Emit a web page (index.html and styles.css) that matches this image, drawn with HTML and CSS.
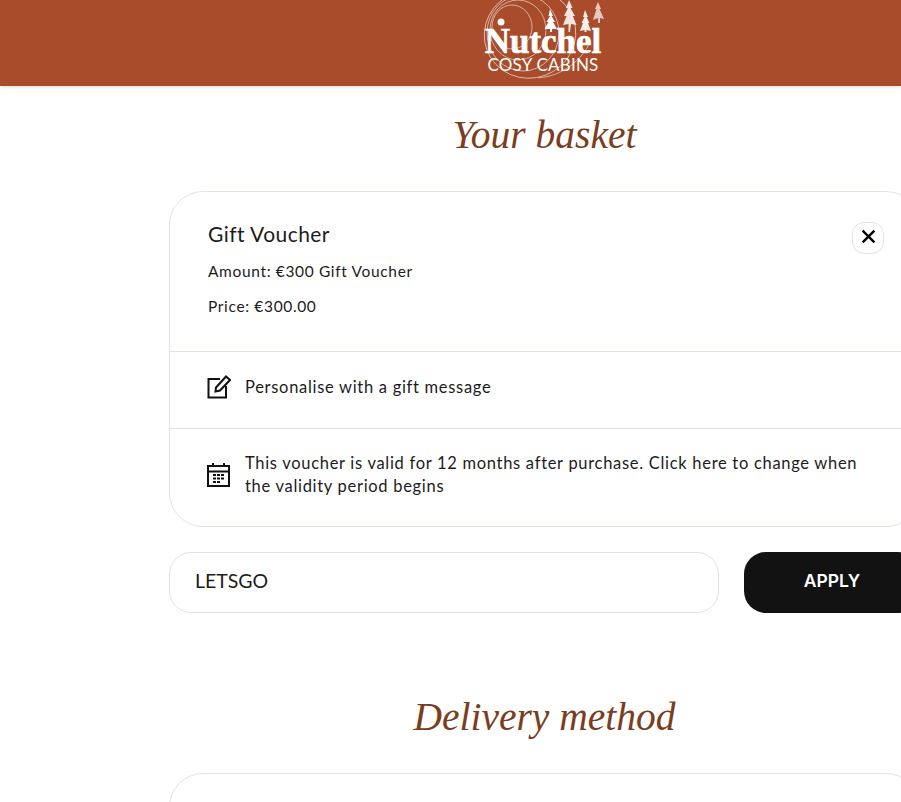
FILE: index.html
```html
<!DOCTYPE html>
<html lang="en">
<head>
<meta charset="UTF-8">
<meta name="viewport" content="width=device-width, initial-scale=1.0">
<title>Your basket</title>
<link rel="stylesheet" href="styles.css">
</head>
<body>
<div class="header">
  <a class="logo">
    <svg class="logo-art" width="130" height="86" viewBox="0 0 130 86">
      <g fill="none" stroke="#fff" stroke-width="0.8" opacity="0.7">
        <ellipse cx="52" cy="34" rx="46" ry="44" transform="rotate(-20 52 34)"/>
        <ellipse cx="45" cy="33" rx="36" ry="38"/>
        <ellipse cx="40" cy="30" rx="28" ry="30"/>
        <ellipse cx="34" cy="27" rx="20" ry="22"/>
        <path d="M60 78C85 76 104 60 112 42"/>
      </g>
      <circle cx="23" cy="22" r="3.5" fill="#fff"/>
      <g fill="#fff">
        <path d="M72 9l3 7-1.500 0 3.500 6-2 0 4 7-5 0 0 3-2 0 0-3-5.500 0 4-7-2 0 3.500-6-1.500 0z"/>
        <path d="M91 0l3.500 8-2 0 4.500 8-2.500 0 4 9-5.500-1-1 8-1.500 0 0-8-5.500 1 3.500-9-2.500 0 4-8-2 0z" opacity="0.85"/>
        <path d="M107 10l3 7-1.500 0 3 6-1.500 0 3 8-4.500-1 0 2-2 0 0-2-4.500 1 3-8-1.500 0 3-6-1.500 0z" opacity="0.9"/>
        <path d="M120 2l3 7-1.500 0 4.500 10-4-1 0 5-2 0 0-5-5 2 3.500-11-1.500 0z" opacity="0.7"/>
      </g>
    </svg>
    <span class="logo-name">Nutchel</span>
    <span class="logo-sub">COSY CABINS</span>
  </a>
</div>

<div class="main">
  <h2 class="title">Your basket</h2>

  <div class="card">
    <div class="item">
      <button class="remove" aria-label="Remove">
        <svg width="15" height="15" viewBox="0 0 14 14"><path d="M1.500 1.500l11 11M12.500 1.500l-11 11" stroke="#000" stroke-width="2.200" fill="none"/></svg>
      </button>
      <h3>Gift Voucher</h3>
      <p>Amount: €300 Gift Voucher</p>
      <p>Price: €300.00</p>
    </div>
    <div class="row row-message">
      <svg class="icon" width="24" height="24" viewBox="0 0 24 24" fill="none" stroke="#111" stroke-width="2">
        <path d="M13 4H1.500V22.500H19V11"/>
        <path d="M9 12.500L19 1.500L23 5L13 15.500L8.500 16.500z"/>
      </svg>
      <span>Personalise with a gift message</span>
    </div>
    <div class="row row-valid">
      <svg class="icon" width="24" height="24" viewBox="0 0 24 24" fill="none" stroke="#111" stroke-width="2">
        <rect x="1" y="3" width="21" height="20"/>
        <path d="M1 8.500H22M6 0V4M17 0V4"/>
        <path d="M6 12h3M10 12h3M14 12h3M6 15.500h3M10 15.500h3M14 15.500h3M6 19h3M10 19h3" stroke-width="2"/>
      </svg>
      <span>This voucher is valid for 12 months after purchase. Click here to change when the validity period begins</span>
    </div>
  </div>

  <div class="coupon">
    <input class="coupon-input" type="text" value="LETSGO">
    <button class="apply">APPLY</button>
  </div>

  <h2 class="title title-delivery">Delivery method</h2>

  <div class="card card-delivery"></div>
</div>
</body>
</html>
```

FILE: styles.css
```css
html, body {
  margin: 0;
  padding: 0;
  overflow: hidden;
  height: 802px;
}
body {
  background-color: #fff;
  font-family: "Lato", sans-serif;
  color: #1c1c1c;
}
.header {
  display: flex;
  justify-content: center;
  height: 86px;
  padding-left: 185px;
  background-color: #a84c2b;
  box-shadow: 0 1px 4px rgba(0, 0, 0, 0.15);
  overflow: hidden;
}
.logo {
  position: relative;
  display: flex;
  flex-direction: column;
  align-items: center;
  width: 130px;
  color: #fff;
}
.logo-art {
  position: absolute;
  top: 0;
  left: 0;
}
.logo-name {
  position: relative;
  margin-top: 26px;
  font-family: "Liberation Serif", serif;
  font-weight: bold;
  font-size: 35px;
  line-height: 32px;
  -webkit-text-stroke: 0.6px #fff;
}
.logo-sub {
  position: relative;
  font-size: 17px;
  line-height: 14px;
  font-weight: 400;
  letter-spacing: 0.2px;
}
.main {
  width: 751px;
  margin-left: 169px;
}
.title {
  margin: 0;
  padding-top: 22px;
  height: 105px;
  box-sizing: border-box;
  text-align: center;
  font-family: "Liberation Serif", serif;
  font-style: italic;
  font-weight: normal;
  font-size: 39.500px;
  line-height: 54px;
  color: #7a3e1e;
}
.card {
  border: 1px solid #e2e1ee;
  border-radius: 34px;
}
.item {
  position: relative;
  height: 159px;
  box-sizing: border-box;
  padding: 29px 38px 0;
}
.item h3 {
  margin: 0 0 14px;
  font-size: 21px;
  line-height: 26px;
  font-weight: 400;
  letter-spacing: 0.45px;
}
.item p {
  margin: 0 0 14px;
  font-size: 15.500px;
  line-height: 21px;
  letter-spacing: 0.65px;
}
.remove {
  position: absolute;
  top: 30px;
  right: 35px;
  display: flex;
  align-items: center;
  justify-content: center;
  width: 32px;
  height: 32px;
  padding: 0 0 3px;
  background: #fff;
  border: 1px solid #e2e1ee;
  border-radius: 12px;
}
.row {
  display: flex;
  align-items: center;
  gap: 14px;
  padding: 0 38px 0 37px;
  border-top: 1px solid #e2e1ee;
  font-size: 16.500px;
  line-height: 23px;
  letter-spacing: 0.7px;
}
.row-message {
  height: 70px;
  padding-bottom: 6px;
}
.row-valid {
  height: 92px;
  padding-bottom: 5px;
}
.icon {
  flex: none;
}
.coupon {
  display: flex;
  gap: 25px;
  margin-top: 25px;
}
.coupon-input {
  width: 550px;
  height: 61px;
  box-sizing: border-box;
  padding: 0 25px 4px;
  border: 1px solid #e2e1ee;
  border-radius: 22px;
  font-family: "Lato", sans-serif;
  font-size: 19.500px;
  color: #1c1c1c;
}
.apply {
  flex: 1;
  height: 61px;
  padding: 0 0 5px;
  background-color: #121212;
  color: #fff;
  border: none;
  border-radius: 22px;
  font-family: "Inter", sans-serif;
  font-weight: 600;
  font-size: 17.500px;
}
.title-delivery {
  margin-top: 67px;
  height: 93px;
  padding-top: 10px;
}
.card-delivery {
  height: 120px;
}
```
